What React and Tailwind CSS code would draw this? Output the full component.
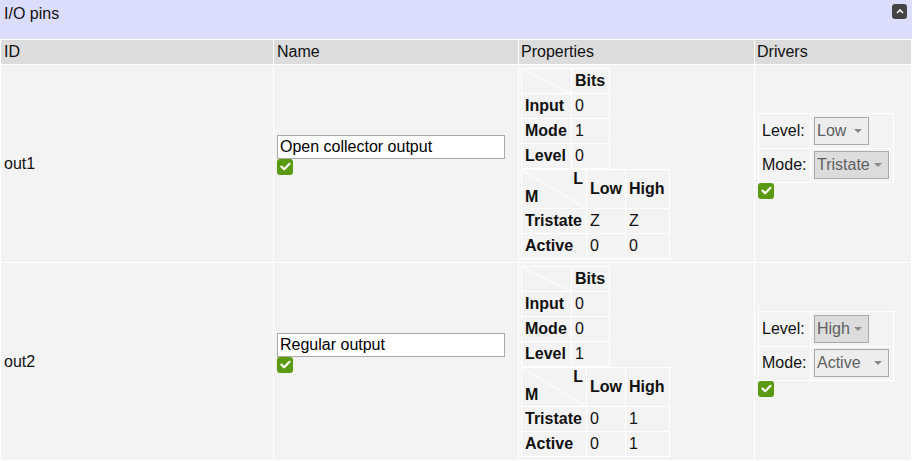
import { useState } from "react";

const pins = [
  {
    id: "out1",
    name: "Open collector output",
    bits: { input: "0", mode: "1", level: "0" },
    truth: { tristate: ["Z", "Z"], active: ["0", "0"] },
    level: "Low",
    mode: "Tristate",
    levelHot: false,
    modeHot: true,
  },
  {
    id: "out2",
    name: "Regular output",
    bits: { input: "0", mode: "0", level: "1" },
    truth: { tristate: ["0", "1"], active: ["0", "1"] },
    level: "High",
    mode: "Active",
    levelHot: true,
    modeHot: false,
  },
];

const diag =
  "bg-[linear-gradient(to_top_right,transparent_calc(50%-1px),white_50%,transparent_calc(50%+1px))]";

const Check = () => (
  <div className="w-[16px] h-[16px] rounded-[3px] bg-[#5a9a10] flex items-center justify-center">
    <svg width="11" height="9" viewBox="0 0 11 9">
      <path d="M1.5 4.6 L4.2 7.2 L9.5 1.8" fill="none" stroke="white" strokeWidth="2.2" strokeLinecap="round" strokeLinejoin="round" />
    </svg>
  </div>
);

const FakeSelect = ({ value, width, hot }) => (
  <div
    className={`h-[28px] border border-[#a9a9a9] flex items-center justify-between pl-[2px] pr-[6px] text-[#5f5f5f] ${
      hot ? "bg-[#dcdcdc]" : "bg-[#ededed]"
    }`}
    style={{ width }}
  >
    <span>{value}</span>
    <svg width="8" height="4" viewBox="0 0 8 4">
      <path d="M0 0 L8 0 L4 4 Z" fill="#8a8a8a" />
    </svg>
  </div>
);

const td = "border border-white px-[3px] h-[25px] align-middle";

const BitsTable = ({ bits }) => (
  <table className="border-collapse">
    <tbody>
      <tr>
        <td className={`border border-white h-[24px] w-[50px] ${diag}`}></td>
        <th className="border border-white px-[3px] h-[24px] w-[38px] text-left font-bold">Bits</th>
      </tr>
      <tr>
        <th className={`${td} text-left font-bold`}>Input</th>
        <td className={td}>{bits.input}</td>
      </tr>
      <tr>
        <th className={`${td} text-left font-bold`}>Mode</th>
        <td className={td}>{bits.mode}</td>
      </tr>
      <tr>
        <th className={`${td} text-left font-bold`}>Level</th>
        <td className={td}>{bits.level}</td>
      </tr>
    </tbody>
  </table>
);

const TruthTable = ({ truth }) => (
  <table className="border-collapse">
    <tbody>
      <tr>
        <td className={`border border-white h-[39px] w-[65px] p-0 ${diag}`}>
          <div className="h-[38px] flex flex-col font-bold px-[3px] leading-[18px]">
            <span className="self-end">L</span>
            <span className="self-start">M</span>
          </div>
        </td>
        <th className="border border-white px-[3px] h-[39px] w-[38px] text-left font-bold">Low</th>
        <th className="border border-white px-[3px] h-[39px] w-[44px] text-left font-bold">High</th>
      </tr>
      <tr>
        <th className={`${td} text-left font-bold`}>Tristate</th>
        <td className={td}>{truth.tristate[0]}</td>
        <td className={td}>{truth.tristate[1]}</td>
      </tr>
      <tr>
        <th className={`${td} text-left font-bold`}>Active</th>
        <td className={td}>{truth.active[0]}</td>
        <td className={td}>{truth.active[1]}</td>
      </tr>
    </tbody>
  </table>
);

const PinRow = ({ pin }) => {
  const [name, setName] = useState(pin.name);
  return (
    <tr className="h-[197px]">
      <td className="bg-[#f3f3f3] px-[3px] align-middle">{pin.id}</td>
      <td className="bg-[#f3f3f3] px-[3px] align-middle">
        <input
          className="block w-[228px] h-[24px] border border-[#a9a9a9] bg-white px-[2px] text-black outline-none"
          value={name}
          onChange={(e) => setName(e.target.value)}
        />
        <div className="h-[34px]">
          <Check />
        </div>
      </td>
      <td className="bg-[#f3f3f3] px-[2px] align-middle">
        <BitsTable bits={pin.bits} />
        <TruthTable truth={pin.truth} />
      </td>
      <td className="bg-[#f3f3f3] px-[3px] align-middle">
        <table className="border-collapse">
          <tbody>
            <tr>
              <td className="border border-white h-[35px] w-[52px] px-[3px]">Level:</td>
              <td className="border border-white h-[35px] w-[83px] px-[3px]">
                <FakeSelect value={pin.level} width={55} hot={pin.levelHot} />
              </td>
            </tr>
            <tr>
              <td className="border border-white h-[34px] px-[3px]">Mode:</td>
              <td className="border border-white h-[34px] px-[3px]">
                <FakeSelect value={pin.mode} width={75} hot={pin.modeHot} />
              </td>
            </tr>
          </tbody>
        </table>
        <div className="h-[32px]">
          <Check />
        </div>
      </td>
    </tr>
  );
};

export default function App() {
  return (
    <div className="w-[912px] h-[461px] bg-white text-[16px] text-[#111] font-['Liberation_Sans',Arial,sans-serif] overflow-hidden">
      <div className="h-[39px] bg-[#dcdcfc] flex justify-between items-start pl-[4px] pr-[5px] pt-[2px]">
        <span>I/O pins</span>
        <button className="mt-[2px] w-[15px] h-[15px] rounded-[3px] bg-[#444] flex items-center justify-center">
          <svg width="8" height="5" viewBox="0 0 8 5">
            <path d="M1 4 L4 1 L7 4" fill="none" stroke="white" strokeWidth="1.6" />
          </svg>
        </button>
      </div>
      <table className="table-fixed border-separate border-spacing-[1px] w-[912px]">
        <colgroup>
          <col className="w-[272px]" />
          <col className="w-[244px]" />
          <col className="w-[235px]" />
          <col className="w-[156px]" />
        </colgroup>
        <thead>
          <tr className="h-[24px] bg-[#dcdcdc]">
            <th className="font-normal text-left px-[3px] bg-[#dcdcdc]">ID</th>
            <th className="font-normal text-left px-[3px] bg-[#dcdcdc]">Name</th>
            <th className="font-normal text-left px-[2px] bg-[#dcdcdc]">Properties</th>
            <th className="font-normal text-left px-[2px] bg-[#dcdcdc]">Drivers</th>
          </tr>
        </thead>
        <tbody>
          {pins.map((p) => (
            <PinRow key={p.id} pin={p} />
          ))}
        </tbody>
      </table>
    </div>
  );
}
